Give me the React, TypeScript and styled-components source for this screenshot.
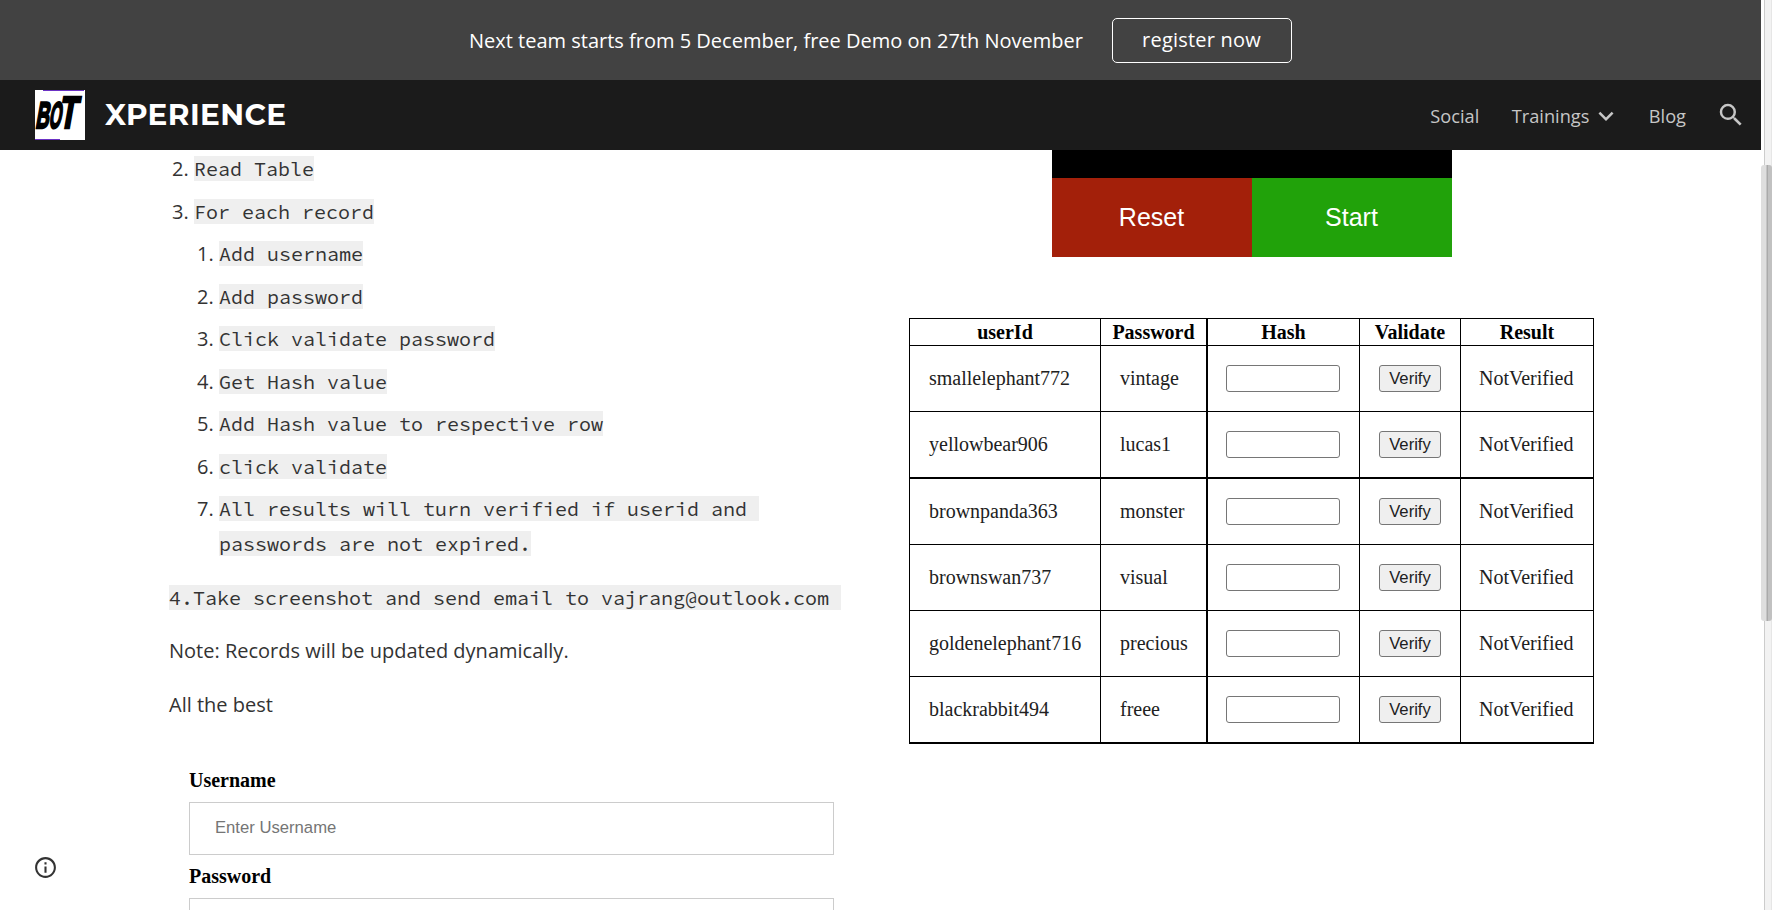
import React from 'react';
import styled, { createGlobalStyle } from 'styled-components';

const GlobalStyle = createGlobalStyle`
  * { box-sizing: border-box; }
  html, body { margin: 0; padding: 0; background: #fff; overflow: hidden; }
`;

const Window = styled.div`
  display: flex;
  width: 1772px;
  height: 910px;
  overflow: hidden;
`;

const Page = styled.div`
  display: flex;
  flex-direction: column;
  width: 1761px;
  height: 910px;
  font-family: 'Open Sans', sans-serif;
  color: #333;
`;

const Banner = styled.div`
  display: flex;
  flex: none;
  align-items: center;
  height: 80px;
  padding-left: 469px;
  background: #424242;
  color: #fff;
  font-size: 20px;
`;

const BannerText = styled.span`
  width: 643px;
  padding-top: 2px;
  white-space: nowrap;
  line-height: 30px;
`;

const RegisterButton = styled.a`
  display: flex;
  justify-content: center;
  width: 180px;
  height: 45px;
  padding-right: 1px;
  border: 1px solid #fff;
  border-radius: 5px;
  line-height: 42px;
  letter-spacing: 0.2px;
`;

const NavBar = styled.header`
  display: flex;
  flex: none;
  align-items: center;
  height: 70px;
  padding: 0 15px 0 35px;
  background: #1b1b1b;
`;

const SiteTitle = styled.h1`
  flex: 1;
  margin: 0 0 0 20px;
  padding-bottom: 2px;
  color: #fff;
  font-family: Montserrat, 'Open Sans', sans-serif;
  font-size: 29.5px;
  font-weight: 700;
  line-height: 36px;
  letter-spacing: 0.42px;
`;

const NavLink = styled.a<{ $gap: number }>`
  display: flex;
  align-items: center;
  gap: 2px;
  margin-right: ${(p) => p.$gap}px;
  padding-top: 1px;
  color: #c6c6c6;
  font-size: 18.2px;
  line-height: 30px;
`;

const Content = styled.main`
  display: flex;
  flex: 1;
  min-height: 0;
  overflow: hidden;
`;

const InfoRail = styled.div`
  display: flex;
  align-items: flex-end;
  width: 169px;
  padding: 0 0 30px 33px;
`;

const LeftColumn = styled.div`
  width: 740px;
  padding-top: 1px;
`;

const Steps = styled.ol<{ $indent: number }>`
  display: flex;
  flex-direction: column;
  gap: 7.5px;
  margin: 0;
  padding: 0 0 0 ${(p) => p.$indent}px;
  list-style: none;
`;

const Step = styled.li`
  display: flex;
  font-size: 20px;
  line-height: 35px;
`;

const StepNumber = styled.span`
  width: 22px;
`;

const Code = styled.code`
  background: #efefef;
  font-family: 'Source Code Pro', 'Noto Sans Mono', 'DejaVu Sans Mono', monospace;
  font-size: 20px;
  white-space: pre;
`;

const Paragraph = styled.p`
  margin: 18.2px 0 0;
  font-size: 20px;
  line-height: 35px;
`;

const Closing = styled.div`
  padding-top: 1px;
`;

const LoginForm = styled.form`
  display: flex;
  flex-direction: column;
  width: 645px;
  margin: 47.4px 0 0 20px;
`;

const FieldLabel = styled.label`
  color: #000;
  font-family: 'Liberation Serif', serif;
  font-size: 20px;
  font-weight: 700;
  line-height: 23px;
`;

const FieldInput = styled.input`
  height: 53px;
  margin: 10px 0;
  padding: 0 25px 1px;
  border: 1px solid #ccc;
  border-radius: 0;
  font-family: 'Liberation Sans', sans-serif;
  font-size: 16.67px;
  &::placeholder { color: #757575; }
`;

const RightColumn = styled.div`
  display: flex;
  flex-direction: column;
  width: 685px;
`;

const Stopwatch = styled.div`
  display: grid;
  grid-template-columns: 200px 200px;
  grid-template-rows: 28px 79px;
  align-self: flex-start;
  margin: 0 0 61px 143px;
  background: #000;
`;

const TimerDisplay = styled.div`
  grid-column: 1 / 3;
`;

const TimerButton = styled.button<{ $color: string }>`
  padding: 0 1px 0 0;
  border: 0;
  background: ${(p) => p.$color};
  color: #fff;
  font-family: 'Liberation Sans', sans-serif;
  font-size: 25px;
`;

const Table = styled.table`
  width: 685px;
  border: solid #000;
  border-width: 1px 0 0 1px;
  border-collapse: separate;
  border-spacing: 0;
  table-layout: fixed;
  font-family: 'Liberation Serif', serif;
  font-size: 20px;
  color: #212121;
`;

const Row = styled.tr<{ $height: number }>`
  height: ${(p) => p.$height}px;
`;

const HeadCell = styled.th<{ $thick?: boolean }>`
  padding: 1px 0 0;
  border: solid #000;
  border-width: 0 ${(p) => (p.$thick ? 2 : 1)}px 1px 0;
  color: #000;
  line-height: 23px;
`;

const Cell = styled.td<{ $thick?: boolean; $thickBottom?: boolean }>`
  padding: 0 0 0 19px;
  border: solid #000;
  border-width: 0 ${(p) => (p.$thick ? 2 : 1)}px ${(p) => (p.$thickBottom ? 2 : 1)}px 0;
  line-height: 23px;
`;

const ResultCell = styled(Cell)`
  padding-left: 18px;
`;

const HashInput = styled.input`
  display: block;
  width: 114px;
  height: 27px;
  margin-left: -1px;
  border: 1px solid #767676;
  border-radius: 3px;
`;

const VerifyButton = styled.button`
  display: block;
  width: 62px;
  height: 27px;
  padding: 0;
  border: 1px solid #767676;
  border-radius: 3px;
  background: #efefef;
  color: #212121;
  font-family: 'Liberation Sans', sans-serif;
  font-size: 16.67px;
  line-height: 24px;
`;

const ScrollTrack = styled.div`
  width: 11px;
  height: 910px;
  padding-top: 165px;
  background: linear-gradient(to right, #fff 3px, #ccc 3px, #ccc 4px, #f2f2f2 4px, #f2f2f2 10px, #e6e6e6 10px);
`;

const ScrollThumb = styled.div`
  height: 456px;
  border-radius: 3px;
  background: linear-gradient(to right, #dedede 5px, #aaa 6px, #aaa 7px, #c1c1c1 7px);
`;

const LogoSvg = styled.svg`
  overflow: visible;
`;

const Logo = () => (
  <LogoSvg width="50" height="50" viewBox="0 0 50 50">
    <rect width="50" height="50" fill="#fff" />
    <path d="M8 .5H49M0 49.5H25" stroke="#6b32c4" />
    <g fontFamily="Liberation Sans" fontWeight="700" stroke="#000" strokeWidth="2.4">
      <text transform="translate(0 38) skewX(-10) scale(.5 1)" fontSize="37">B</text>
      <text transform="translate(13.2 38) skewX(-10) scale(.42 1)" fontSize="37">O</text>
      <text transform="translate(23 38) skewX(-10) scale(.66 1)" fontSize="45">T</text>
    </g>
  </LogoSvg>
);

const ChevronIcon = () => (
  <svg width="30" height="30" viewBox="0 0 24 24" fill="#c6c6c6">
    <path d="M16.59 8.59 12 13.17 7.41 8.59 6 10l6 6 6-6z" />
  </svg>
);

const SearchIcon = () => (
  <svg width="30" height="30" viewBox="0 0 24 24" fill="#c6c6c6">
    <path d="M15.5 14h-.79l-.28-.27A6.471 6.471 0 0 0 16 9.5 6.5 6.5 0 1 0 9.5 16c1.61 0 3.09-.59 4.23-1.57l.27.28v.79l5 4.99L20.49 19l-4.99-5zm-6 0C7.01 14 5 11.99 5 9.5S7.01 5 9.5 5 14 7.01 14 9.5 11.99 14 9.5 14z" />
  </svg>
);

const InfoIcon = () => (
  <svg width="25" height="25" viewBox="0 0 24 24" fill="#333">
    <path d="M11 17h2v-6h-2v6zm1-15C6.48 2 2 6.48 2 12s4.48 10 10 10 10-4.48 10-10S17.52 2 12 2zm0 18c-4.41 0-8-3.59-8-8s3.59-8 8-8 8 3.59 8 8-3.59 8-8 8zM11 9h2V7h-2v2z" />
  </svg>
);

const outerSteps = ['Read Table', 'For each record'];

const innerSteps = [
  'Add username',
  'Add password',
  'Click validate password',
  'Get Hash value',
  'Add Hash value to respective row',
  'click validate',
  'All results will turn verified if userid and \npasswords are not expired.',
];

const records = [
  ['smallelephant772', 'vintage'],
  ['yellowbear906', 'lucas1'],
  ['brownpanda363', 'monster'],
  ['brownswan737', 'visual'],
  ['goldenelephant716', 'precious'],
  ['blackrabbit494', 'freee'],
];

const columnWidths = [191, 107, 152, 101, 133];

export default function App() {
  return (
    <Window>
      <GlobalStyle />
      <Page>
        <Banner>
          <BannerText>Next team starts from 5 December, free Demo on 27th November</BannerText>
          <RegisterButton>register now</RegisterButton>
        </Banner>
        <NavBar>
          <Logo />
          <SiteTitle>XPERIENCE</SiteTitle>
          <NavLink $gap={32.5}>Social</NavLink>
          <NavLink $gap={27.5}>
            Trainings
            <ChevronIcon />
          </NavLink>
          <NavLink $gap={30}>Blog</NavLink>
          <SearchIcon />
        </NavBar>
        <Content>
          <InfoRail>
            <InfoIcon />
          </InfoRail>
          <LeftColumn>
            <Steps $indent={3}>
              {outerSteps.map((step, i) => (
                <Step key={step}>
                  <StepNumber>{i + 2}.</StepNumber>
                  <span><Code>{step}</Code></span>
                </Step>
              ))}
              <Steps $indent={25}>
                {innerSteps.map((step, i) => (
                  <Step key={step}>
                    <StepNumber>{i + 1}.</StepNumber>
                    <span><Code>{step}</Code></span>
                  </Step>
                ))}
              </Steps>
            </Steps>
            <Closing>
              <Paragraph><Code>{'4.Take screenshot and send email to vajrang@outlook.com '}</Code></Paragraph>
              <Paragraph>Note: Records will be updated dynamically.</Paragraph>
              <Paragraph>All the best</Paragraph>
            </Closing>
            <LoginForm>
              <FieldLabel>Username</FieldLabel>
              <FieldInput placeholder="Enter Username" />
              <FieldLabel>Password</FieldLabel>
              <FieldInput />
            </LoginForm>
          </LeftColumn>
          <RightColumn>
            <Stopwatch>
              <TimerDisplay />
              <TimerButton $color="#a3200a">Reset</TimerButton>
              <TimerButton $color="#21a20a">Start</TimerButton>
            </Stopwatch>
            <Table>
              <colgroup>
                {columnWidths.map((w, i) => <col key={i} width={w} />)}
              </colgroup>
              <thead>
                <Row $height={27}>
                  <HeadCell>userId</HeadCell>
                  <HeadCell $thick>Password</HeadCell>
                  <HeadCell>Hash</HeadCell>
                  <HeadCell>Validate</HeadCell>
                  <HeadCell>Result</HeadCell>
                </Row>
              </thead>
              <tbody>
                {records.map(([user, password], i) => {
                  const thickBottom = i === 1 || i === 5;
                  return (
                    <Row key={user} $height={thickBottom ? 67 : 66}>
                      <Cell $thickBottom={thickBottom}>{user}</Cell>
                      <Cell $thick $thickBottom={thickBottom}>{password}</Cell>
                      <Cell $thickBottom={thickBottom}><HashInput /></Cell>
                      <Cell $thickBottom={thickBottom}><VerifyButton>Verify</VerifyButton></Cell>
                      <ResultCell $thickBottom={thickBottom}>NotVerified</ResultCell>
                    </Row>
                  );
                })}
              </tbody>
            </Table>
          </RightColumn>
        </Content>
      </Page>
      <ScrollTrack>
        <ScrollThumb />
      </ScrollTrack>
    </Window>
  );
}
